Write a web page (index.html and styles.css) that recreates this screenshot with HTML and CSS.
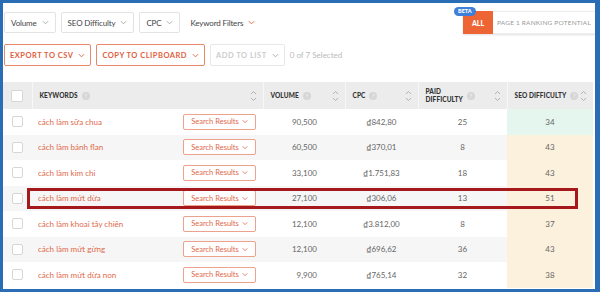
FILE: index.html
```html
<!DOCTYPE html>
<html lang="vi">
<head>
    <meta charset="UTF-8">
    <title>Keyword Research</title>
    <link rel="stylesheet" href="styles.css">
</head>
<body>
    <div class="frame">
        <div class="top-bar">
            <div class="filters">
                <div class="filter-box">Volume <svg class="chev" viewBox="0 0 8 5"><polyline points="1,1 4,4 7,1"/></svg></div>
                <div class="filter-box">SEO Difficulty <svg class="chev" viewBox="0 0 8 5"><polyline points="1,1 4,4 7,1"/></svg></div>
                <div class="filter-box">CPC <svg class="chev" viewBox="0 0 8 5"><polyline points="1,1 4,4 7,1"/></svg></div>
                <div class="filter-link">Keyword Filters <svg class="chev red" viewBox="0 0 8 5"><polyline points="1,1 4,4 7,1"/></svg></div>
            </div>
            <div class="toggle">
                <span class="beta">BETA</span>
                <span class="toggle-all">ALL</span>
                <span class="toggle-page">PAGE 1 RANKING POTENTIAL</span>
            </div>
        </div>

        <div class="actions">
            <button class="action-btn">EXPORT TO CSV <svg class="chev red" viewBox="0 0 8 5"><polyline points="1,1 4,4 7,1"/></svg></button>
            <button class="action-btn">COPY TO CLIPBOARD <svg class="chev red" viewBox="0 0 8 5"><polyline points="1,1 4,4 7,1"/></svg></button>
            <button class="action-btn disabled">ADD TO LIST <svg class="chev" viewBox="0 0 8 5"><polyline points="1,1 4,4 7,1"/></svg></button>
            <span class="selected">0 of 7 Selected</span>
        </div>

        <div class="table-wrap">
            <table class="kw-table">
                <colgroup>
                    <col class="c-check">
                    <col class="c-kw">
                    <col class="c-vol">
                    <col class="c-cpc">
                    <col class="c-paid">
                    <col class="c-seo">
                </colgroup>
                <thead>
                    <tr>
                        <th><span class="checkbox head"></span></th>
                        <th><div class="th-in"><span>KEYWORDS</span><i class="info">?</i><svg class="sort" viewBox="0 0 7 12"><polyline points="1,4 3.5,1.5 6,4"/><polyline points="1,8 3.5,10.5 6,8"/></svg></div></th>
                        <th><div class="th-in"><span>VOLUME</span><i class="info">?</i><svg class="sort" viewBox="0 0 7 12"><polyline points="1,4 3.5,1.5 6,4"/><polyline points="1,8 3.5,10.5 6,8"/></svg></div></th>
                        <th><div class="th-in"><span>CPC</span><i class="info">?</i><svg class="sort" viewBox="0 0 7 12"><polyline points="1,4 3.5,1.5 6,4"/><polyline points="1,8 3.5,10.5 6,8"/></svg></div></th>
                        <th><div class="th-in"><span>PAID<br>DIFFICULTY</span><i class="info">?</i><svg class="sort" viewBox="0 0 7 12"><polyline points="1,4 3.5,1.5 6,4"/><polyline points="1,8 3.5,10.5 6,8"/></svg></div></th>
                        <th><div class="th-in"><span>SEO DIFFICULTY</span><i class="info">?</i><svg class="sort" viewBox="0 0 7 12"><polyline points="1,4 3.5,1.5 6,4"/><polyline points="1,8 3.5,10.5 6,8"/></svg></div></th>
                    </tr>
                </thead>
                <tbody>
                    <tr>
                        <td><span class="checkbox"></span></td>
                        <td><div class="kw-cell"><span class="kw">cách làm sữa chua</span><span class="serp">Search Results <svg class="chev red" viewBox="0 0 8 5"><polyline points="1,1 4,4 7,1"/></svg></span></div></td>
                        <td class="num">90,500</td>
                        <td class="center">₫842,80</td>
                        <td class="center">25</td>
                        <td class="center seo easy">34</td>
                    </tr>
                    <tr>
                        <td><span class="checkbox"></span></td>
                        <td><div class="kw-cell"><span class="kw">cách làm bánh flan</span><span class="serp">Search Results <svg class="chev red" viewBox="0 0 8 5"><polyline points="1,1 4,4 7,1"/></svg></span></div></td>
                        <td class="num">60,500</td>
                        <td class="center">₫370,01</td>
                        <td class="center">8</td>
                        <td class="center seo">43</td>
                    </tr>
                    <tr>
                        <td><span class="checkbox"></span></td>
                        <td><div class="kw-cell"><span class="kw">cách làm kim chi</span><span class="serp">Search Results <svg class="chev red" viewBox="0 0 8 5"><polyline points="1,1 4,4 7,1"/></svg></span></div></td>
                        <td class="num">33,100</td>
                        <td class="center">₫1.751,83</td>
                        <td class="center">18</td>
                        <td class="center seo">43</td>
                    </tr>
                    <tr class="marked">
                        <td><span class="checkbox"></span></td>
                        <td><div class="kw-cell"><span class="kw">cách làm mứt dừa</span><span class="serp">Search Results <svg class="chev red" viewBox="0 0 8 5"><polyline points="1,1 4,4 7,1"/></svg></span></div></td>
                        <td class="num">27,100</td>
                        <td class="center">₫306,06</td>
                        <td class="center">13</td>
                        <td class="center seo">51</td>
                    </tr>
                    <tr>
                        <td><span class="checkbox"></span></td>
                        <td><div class="kw-cell"><span class="kw">cách làm khoai tây chiên</span><span class="serp">Search Results <svg class="chev red" viewBox="0 0 8 5"><polyline points="1,1 4,4 7,1"/></svg></span></div></td>
                        <td class="num">12,100</td>
                        <td class="center">₫3.812,00</td>
                        <td class="center">8</td>
                        <td class="center seo">37</td>
                    </tr>
                    <tr>
                        <td><span class="checkbox"></span></td>
                        <td><div class="kw-cell"><span class="kw">cách làm mứt gừng</span><span class="serp">Search Results <svg class="chev red" viewBox="0 0 8 5"><polyline points="1,1 4,4 7,1"/></svg></span></div></td>
                        <td class="num">12,100</td>
                        <td class="center">₫696,62</td>
                        <td class="center">36</td>
                        <td class="center seo">43</td>
                    </tr>
                    <tr>
                        <td><span class="checkbox"></span></td>
                        <td><div class="kw-cell"><span class="kw">cách làm mứt dừa non</span><span class="serp">Search Results <svg class="chev red" viewBox="0 0 8 5"><polyline points="1,1 4,4 7,1"/></svg></span></div></td>
                        <td class="num">9,900</td>
                        <td class="center">₫765,14</td>
                        <td class="center">32</td>
                        <td class="center seo">38</td>
                    </tr>
                </tbody>
            </table>
            <div class="highlight"></div>
        </div>
    </div>
</body>
</html>
```

FILE: styles.css
```css
* {
    box-sizing: border-box;
}

body {
    margin: 0;
    font-family: 'Lato', 'Open Sans', sans-serif;
    color: #555;
    background: #fff;
}

.frame {
    width: 600px;
    height: 292px;
    overflow: hidden;
    border-top: 3px solid #2b6db4;
    border-left: 3px solid #2b6db4;
    border-right: 5px solid #2b6db4;
    border-bottom: 3px solid #2b6db4;
    background: #fff;
}

.chev {
    width: 7px;
    height: 5px;
    fill: none;
    stroke: #aaa;
    stroke-width: 1.1;
    margin-left: 5px;
}

.chev.red {
    stroke: #e0684a;
}

/* top filter bar */
.top-bar {
    display: flex;
    justify-content: space-between;
    align-items: flex-start;
    padding: 8px 0 0 1px;
    height: 40px;
}

.filters {
    display: flex;
    align-items: center;
    gap: 5px;
    padding-top: 1px;
}

.filter-box {
    height: 21px;
    display: flex;
    align-items: center;
    padding: 0 6px;
    border: 1px solid #e3e3e3;
    border-radius: 2px;
    font-size: 8px;
    letter-spacing: -0.15px;
    color: #444;
}

.filter-link {
    display: flex;
    align-items: center;
    padding-left: 5px;
    font-size: 8px;
    letter-spacing: -0.15px;
    color: #444;
}

.toggle {
    position: relative;
    display: flex;
    margin-right: -1px;
    box-shadow: 0 1px 2px rgba(0, 0, 0, 0.12);
}

.beta {
    position: absolute;
    top: -4px;
    left: -9px;
    background: #3e7fd9;
    color: #fff;
    font-size: 5.5px;
    font-weight: 900;
    padding: 1px 4px;
    border-radius: 5px;
    line-height: 7px;
}

.toggle-all {
    width: 30px;
    height: 23px;
    background: #ee6535;
    color: #fff;
    font-size: 7px;
    font-weight: 900;
    display: flex;
    align-items: center;
    justify-content: center;
}

.toggle-page {
    width: 103px;
    height: 23px;
    border: 1px solid #eee;
    border-left: none;
    color: #999;
    font-size: 6.5px;
    letter-spacing: 0.2px;
    display: flex;
    align-items: center;
    justify-content: center;
}

/* action buttons */
.actions {
    display: flex;
    align-items: center;
    gap: 5px;
    padding-left: 1px;
    height: 24px;
}

.action-btn {
    height: 22px;
    display: flex;
    align-items: center;
    padding: 0 5px;
    background: #fff;
    border: 1px solid #e9876a;
    border-radius: 2px;
    color: #e0603e;
    font-family: inherit;
    font-size: 7.5px;
    font-weight: 700;
    letter-spacing: 0.5px;
}

.action-btn.disabled {
    border-color: #e8e8e8;
    color: #ccc;
}

.selected {
    font-size: 8px;
    color: #bbb;
}

/* keyword table */
.table-wrap {
    position: relative;
    margin-top: 15px;
    width: 590px;
}

.kw-table {
    width: 590px;
    table-layout: fixed;
    border-collapse: collapse;
}

.c-check { width: 29px; }
.c-kw { width: 231px; }
.c-vol { width: 82px; }
.c-cpc { width: 73px; }
.c-paid { width: 89px; }
.c-seo { width: 86px; }

.kw-table th {
    height: 27px;
    padding: 0;
    background: #ececec;
    border-left: 1px solid #f7f7f7;
    text-align: left;
    font-size: 6.5px;
    font-weight: 900;
    color: #333;
    letter-spacing: 0.1px;
}

.kw-table th:first-child {
    border-left: none;
    text-align: center;
}

.th-in {
    display: flex;
    align-items: center;
    padding: 0 6px 0 7px;
    line-height: 8px;
}

.th-in span {
    margin-right: 4px;
}

.info {
    width: 8px;
    height: 8px;
    border-radius: 50%;
    background: #d6d6d6;
    color: #eee;
    font-size: 6px;
    font-style: normal;
    font-weight: 700;
    line-height: 8px;
    text-align: center;
}

.sort {
    width: 7px;
    height: 12px;
    margin-left: auto;
    fill: none;
    stroke: #aaa;
    stroke-width: 0.9;
}

.kw-table td {
    height: 25.5px;
    padding: 0;
    font-size: 8px;
    color: #666;
}

.kw-table tbody tr:nth-child(even) td {
    background: #f6f6f6;
}

.kw-table td:first-child {
    text-align: center;
}

.checkbox {
    display: inline-block;
    width: 11px;
    height: 11px;
    border: 1px solid #d6d6d6;
    border-radius: 2px;
    background: #fff;
    vertical-align: middle;
}

.checkbox.head {
    width: 12px;
    height: 12px;
}

.kw-cell {
    display: flex;
    align-items: center;
    justify-content: space-between;
    padding: 0 7px 0 6px;
}

.kw {
    color: #e0684a;
    font-size: 8px;
}

.serp {
    width: 73px;
    height: 16px;
    display: flex;
    align-items: center;
    justify-content: center;
    border: 1px solid #eca28c;
    border-radius: 2px;
    color: #e0684a;
    font-size: 7.5px;
    background: #fff;
}

.serp .chev {
    width: 6px;
    margin-left: 3px;
}

.num {
    text-align: right;
    padding-right: 28px !important;
}

.center {
    text-align: center;
}

.kw-table td.seo {
    background: #fbf1dd !important;
}

.kw-table td.seo.easy {
    background: #e5f6ee !important;
}

.highlight {
    position: absolute;
    left: 24px;
    top: 106px;
    width: 551px;
    height: 21px;
    border: 3px solid #a5191d;
    pointer-events: none;
}
```
